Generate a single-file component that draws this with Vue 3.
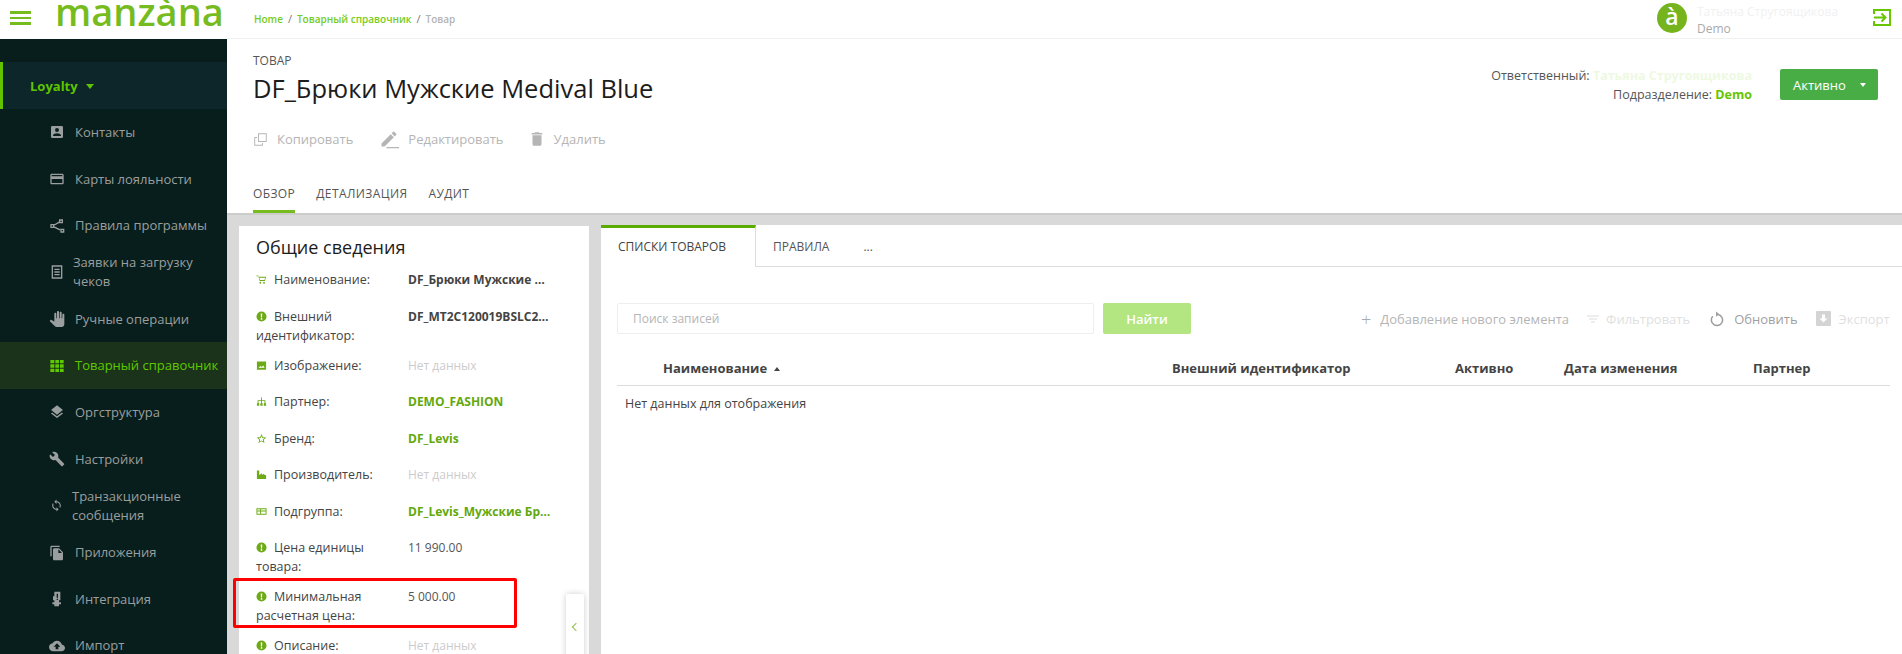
<script setup>
const P = {
  contact: 'M3 5v14a2 2 0 0 0 2 2h14a2 2 0 0 0 2-2V5a2 2 0 0 0-2-2H5a2 2 0 0 0-2 2zm12 4a3 3 0 1 1-6 0 3 3 0 0 1 6 0zm-9 8c0-2 4-3.1 6-3.1s6 1.1 6 3.1v1H6v-1z',
  card: 'M20 4H4c-1.11 0-1.99.89-1.99 2L2 18c0 1.11.89 2 2 2h16c1.11 0 2-.89 2-2V6c0-1.11-.89-2-2-2zm0 14H4v-6h16v6zm0-10H4V6h16v2z',
  rules: 'M15 2h6v6h-6V2zm2 2v2h2V4h-2zM2 9h6v6H2V9zm2 2v2h2v-2H4zm13 5h6v6h-6v-6zm2 2v2h2v-2h-2zM7.5 9.6l8-4.6 1 1.7-8 4.6-1-1.7zm1 3.1l8.5 4.2-.9 1.8-8.5-4.2.9-1.8z',
  receipt: 'M4 2h16v20H4V2zm2 2v16h12V4H6zm2 3h8v2H8V7zm0 4h8v2H8v-2zm0 4h8v2H8v-2z',
  hand: 'M23 5.5V20c0 2.2-1.8 4-4 4h-7.3c-1.08 0-2.1-.43-2.85-1.19L1 14.83s1.26-1.23 1.3-1.25c.22-.19.49-.29.79-.29.22 0 .42.06.6.16.04.01 4.31 2.46 4.31 2.46V4c0-.83.67-1.5 1.5-1.5S11 3.17 11 4v7h1V1.5c0-.83.67-1.5 1.5-1.5S15 .67 15 1.5V11h1V2.5c0-.83.67-1.5 1.5-1.5s1.5.67 1.5 1.5V11h1V5.5c0-.83.67-1.5 1.5-1.5s1.5.67 1.5 1.5z',
  grid: 'M2 3h6v5H2V3zm7.5 0h5.5v5H9.500V3zM16.500 3H22v5h-5.500V3zM2 9.500h6V14.500H2v-5zm7.500 0h5.500V14.500H9.500v-5zm7 0H22V14.500h-5.500v-5zM2 16h6v5H2v-5zm7.500 0h5.500v5H9.500v-5zm7 0H22v5h-5.500v-5z',
  layers: 'M11.99 18.54l-7.37-5.73L3 14.07l9 7 9-7-1.63-1.27-7.38 5.74zM12 16l7.36-5.73L21 9l-9-7-9 7 1.63 1.27L12 16z',
  wrench: 'M22.7 19l-9.1-9.1c.9-2.3.4-5-1.5-6.9-2-2-5-2.4-7.4-1.3L9 6 6 9 1.6 4.7C.4 7.1.9 10.1 2.9 12.1c1.9 1.9 4.6 2.4 6.9 1.5l9.1 9.1c.4.4 1 .4 1.4 0l2.3-2.3c.5-.4.5-1.1.1-1.4z',
  sync: 'M12 4V1L8 5l4 4V6c3.31 0 6 2.69 6 6 0 1.01-.25 1.97-.7 2.8l1.46 1.46C19.54 15.03 20 13.57 20 12c0-4.42-3.58-8-8-8zm0 14c-3.31 0-6-2.69-6-6 0-1.01.25-1.97.7-2.8L5.24 7.74C4.46 8.97 4 10.43 4 12c0 4.42 3.58 8 8 8v3l4-4-4-4v3z',
  files: 'M16 1H4c-1.1 0-2 .9-2 2v14h2V3h12V1zm-1 4l6 6v10c0 1.1-.9 2-2 2H7.990C6.890 23 6 22.100 6 21l.010-14c0-1.100.890-2 1.990-2h7zm-1 7h5.500L14 6.500V12z',
  plug: 'M8 1h9v13h-2v3h3v3h-3v3H8v-3H5v-3h3v-3H6V8h2V1zm3.500 3v6h2V4h-2zm0 7.500v2h2v-2h-2z',
  cloud: 'M19.350 10.040C18.670 6.590 15.640 4 12 4 9.110 4 6.600 5.640 5.350 8.040 2.340 8.360 0 10.910 0 14c0 3.310 2.690 6 6 6h13c2.760 0 5-2.240 5-5 0-2.640-2.050-4.780-4.650-4.960zM14 13v4h-4v-4H7l5-5 5 5h-3z',
  copy: 'M8 2h14v14H8V2zm1.500 1.500v11h11v-11h-11zM2 8h4.500v1.500h-3v11h11v-3H16V22H2V8z',
  edit: 'M3 17.250V21h3.750L17.810 9.940l-3.750-3.750L3 17.250zM20.710 7.040a1 1 0 0 0 0-1.410l-2.340-2.340a1 1 0 0 0-1.410 0l-1.830 1.830 3.750 3.750 1.830-1.830zM9 21.500h15V23H9z',
  trash: 'M6 19c0 1.100.9 2 2 2h8c1.100 0 2-.9 2-2V7H6v12zM19 4h-3.500l-1-1h-5l-1 1H5v2h14V4z',
  cart: 'M1 3h4l1 3h16l-2.500 9H8L5 5H1V3zm6 5l2 5h9.500L20 8H7zm2.500 9a2 2 0 1 1 0 4 2 2 0 0 1 0-4zm8 0a2 2 0 1 1 0 4 2 2 0 0 1 0-4z',
  info: 'M12 1a11 11 0 1 1 0 22 11 11 0 0 1 0-22zm-1.700 4.500.5 8.500h2.400l.5-8.500h-3.400zM12 15.500a1.900 1.900 0 1 0 0 3.800 1.900 1.900 0 0 0 0-3.800z',
  image: 'M2 3h20v18H2V3zm3 14h14l-3.500-5-3 3.500-2.500-2.500-5 4z',
  tree: 'M11 3h2v6h7.500v7h1.500v5h-5v-5h1.500v-5H13v5h1.500v5h-5v-5H11v-5H5.500v5H7v5H2v-5h1.500V9H11V3z',
  star: 'M12 2l3 7 7.500.6-5.700 4.900 1.800 7.400L12 18l-6.600 3.900 1.800-7.400L1.500 9.600 9 9l3-7zm0 4.800L10.300 11l-4.400.3 3.300 2.900-1 4.300 3.800-2.300 3.800 2.300-1-4.300 3.300-2.900-4.400-.3L12 6.800z',
  factory: 'M2 3h5v10l6-4v4l5-3v3h4v9H2V3z',
  group: 'M1 5h22v14H1V5zm2 2v3h6V7H3zm8 0v3h10V7H11zM3 12v5h6v-5H3zm8 0v5h10v-5H11z',
}

const menu = [
  { label: 'Контакты', icon: 'contact' },
  { label: 'Карты лояльности', icon: 'card' },
  { label: 'Правила программы', icon: 'rules' },
  { label: 'Заявки на загрузку чеков', icon: 'receipt', cls: 'wrap' },
  { label: 'Ручные операции', icon: 'hand' },
  { label: 'Товарный справочник', icon: 'grid', cls: 'active' },
  { label: 'Оргструктура', icon: 'layers' },
  { label: 'Настройки', icon: 'wrench' },
  { label: 'Транзакционные сообщения', icon: 'sync', cls: 'wrap narrow' },
  { label: 'Приложения', icon: 'files' },
  { label: 'Интеграция', icon: 'plug' },
  { label: 'Импорт', icon: 'cloud' },
]

const actions = [
  { label: 'Копировать', icon: 'copy', cls: 'a-copy' },
  { label: 'Редактировать', icon: 'edit', cls: 'a-edit' },
  { label: 'Удалить', icon: 'trash', cls: 'a-del' },
]

const fields = [
  { label: 'Наименование:', icon: 'cart', value: 'DF_Брюки Мужские Medival Blue', kind: 'strong' },
  { label: 'Внешний идентификатор:', icon: 'info', value: 'DF_MT2C120019BSLC2019MEDIVAL', kind: 'strong' },
  { label: 'Изображение:', icon: 'image', value: 'Нет данных', kind: 'empty' },
  { label: 'Партнер:', icon: 'tree', value: 'DEMO_FASHION', kind: 'link' },
  { label: 'Бренд:', icon: 'star', value: 'DF_Levis', kind: 'link' },
  { label: 'Производитель:', icon: 'factory', value: 'Нет данных', kind: 'empty' },
  { label: 'Подгруппа:', icon: 'group', value: 'DF_Levis_Мужские Брюки', kind: 'link' },
  { label: 'Цена единицы товара:', icon: 'info', value: '11 990.00', kind: 'plain' },
  { label: 'Минимальная расчетная цена:', icon: 'info', value: '5 000.00', kind: 'plain', marked: true },
  { label: 'Описание:', icon: 'info', value: 'Нет данных', kind: 'empty' },
]

const columns = [
  { label: 'Наименование', cls: 'c-name', sorted: true },
  { label: 'Внешний идентификатор', cls: 'c-ext' },
  { label: 'Активно', cls: 'c-act' },
  { label: 'Дата изменения', cls: 'c-date' },
  { label: 'Партнер', cls: 'c-part' },
]
</script>

<template>
  <div class="page">
    <aside class="side">
      <div class="brand">
        <div class="burger"><i></i><i></i><i></i></div>
        <span class="logo">manzàna</span>
      </div>
      <nav class="nav">
        <div class="section">Loyalty<span class="caret"></span></div>
        <a v-for="m in menu" :key="m.label" class="item" :class="m.cls">
          <svg class="item-icon" viewBox="0 0 24 24"><path :d="P[m.icon]" /></svg>
          <span class="item-text">{{ m.label }}</span>
        </a>
      </nav>
    </aside>

    <div class="main">
      <header class="top">
        <div class="crumbs">
          <a>Home</a><b>/</b><a>Товарный справочник</a><b>/</b><span>Товар</span>
        </div>
        <div class="user">
          <div class="avatar">à</div>
          <div class="who">
            <div class="who-name">Татьяна Стругоящикова</div>
            <div class="who-org">Demo</div>
          </div>
          <svg class="exit" viewBox="0 0 18 19" fill="none" stroke="#66c400" stroke-width="2">
            <path d="M1 6V2h16v15H1v-4" />
            <path d="M1 9.500h11M8.500 5.500l4 4-4 4" />
          </svg>
        </div>
      </header>

      <section class="head">
        <div class="head-row">
          <div>
            <div class="kicker">ТОВАР</div>
            <h1 class="title">DF_Брюки Мужские Medival Blue</h1>
          </div>
          <div class="owner">
            <div class="owner-lines">
              <div>Ответственный: <span class="pale">Татьяна Стругоящикова</span></div>
              <div>Подразделение: <span class="demo">Demo</span></div>
            </div>
            <button class="status">Активно<span class="status-caret"></span></button>
          </div>
        </div>
        <div class="actions">
          <a v-for="a in actions" :key="a.label" class="action" :class="a.cls">
            <svg viewBox="0 0 24 24"><path :d="P[a.icon]" /></svg>{{ a.label }}
          </a>
        </div>
        <div class="tabs">
          <a class="tab on">ОБЗОР</a>
          <a class="tab">ДЕТАЛИЗАЦИЯ</a>
          <a class="tab">АУДИТ</a>
        </div>
      </section>

      <div class="body">
        <section class="info">
          <h2 class="info-title">Общие сведения</h2>
          <div v-for="f in fields" :key="f.label" class="field">
            <div class="f-label">
              <svg class="f-icon" viewBox="0 0 24 24"><path :d="P[f.icon]" /></svg>{{ f.label }}
            </div>
            <div class="f-value" :class="f.kind">{{ f.value }}</div>
            <div v-if="f.marked" class="mark"></div>
          </div>
          <div class="collapse"><span></span></div>
        </section>

        <section class="panel">
          <div class="ptabs">
            <a class="ptab on">СПИСКИ ТОВАРОВ</a>
            <a class="ptab">ПРАВИЛА</a>
            <a class="ptab">...</a>
          </div>
          <div class="tools">
            <div class="search">Поиск записей</div>
            <button class="find">Найти</button>
            <div class="tool-links">
              <a class="tl t-add"><span class="plus">+</span>Добавление нового элемента</a>
              <a class="tl t-filter">
                <svg viewBox="0 0 12 10" fill="none" stroke="#dcdcdc"><path d="M0 2h12M2 5h8M4 8h4" /></svg>Фильтровать
              </a>
              <a class="tl t-refresh">
                <svg viewBox="0 0 16 18" fill="none" stroke="#9b9b9b" stroke-width="1.600">
                  <path d="M10 4.200A6 6 0 1 1 4 6" />
                  <path d="M7.500 1l3.500 3-3.500 2.500z" fill="#9b9b9b" stroke="none" />
                </svg>Обновить
              </a>
              <a class="tl t-export">
                <svg viewBox="0 0 15 15"><rect width="15" height="15" rx="1" fill="#d4d4d4" /><path d="M6 3.500h3v4h2.500l-4 4-4-4H6z" fill="#fff" /></svg>Экспорт
              </a>
            </div>
          </div>
          <div class="thead">
            <div v-for="c in columns" :key="c.label" class="th" :class="c.cls">
              {{ c.label }}<span v-if="c.sorted" class="sort"></span>
            </div>
          </div>
          <div class="nodata">Нет данных для отображения</div>
        </section>
      </div>
    </div>
  </div>
</template>

<style>
html, body { margin: 0; overflow: hidden; }
</style>

<style scoped>
* { box-sizing: border-box; }
.page {
  display: flex;
  width: 1902px;
  height: 654px;
  overflow: hidden;
  font-family: "Open Sans", "Noto Sans", sans-serif;
  font-size: 13px;
  color: #333;
  background: #fff;
}
.side { width: 227px; flex: none; background: #081e1c; }
.brand { height: 39px; background: #fff; display: flex; align-items: flex-start; overflow: hidden; }
.burger { width: 21px; margin: 11px 0 0 10px; display: flex; flex-direction: column; gap: 3px; }
.burger i { display: block; height: 2.500px; background: #76bc21; }
.logo {
  margin: -17px 0 0 24px;
  font-family: "Open Sans", sans-serif;
  font-weight: 600;
  font-size: 38px;
  line-height: 56px;
  color: #76bc21;
}
.nav { padding-top: 23px; }
.section {
  height: 47px;
  background: #0c2629;
  border-left: 3px solid #62c400;
  padding-left: 27px;
  display: flex;
  align-items: center;
  font-weight: 700;
  font-size: 13px;
  color: #5fc400;
}
.caret {
  margin: 2px 0 0 8px;
  border: 4.500px solid transparent;
  border-top: 5px solid #5fc400;
  border-bottom: 0;
}
.item {
  height: 46.700px;
  padding-left: 49px;
  display: flex;
  align-items: center;
  color: #9b9e9e;
  line-height: 19px;
}
.item-icon { width: 16px; height: 16px; flex: none; fill: #9b9e9e; }
.item-text { margin-left: 10px; }
.wrap .item-text { margin-left: 8px; width: 125px; }
.narrow { padding-left: 50px; }
.narrow .item-icon { width: 13px; height: 13px; }
.narrow .item-text { margin-left: 9px; }
.active { background: #1a331a; color: #5fc800; }
.active .item-icon { fill: #5fc800; }

.main { flex: 1; min-width: 0; display: flex; flex-direction: column; background: #d9d9d9; }
.top {
  height: 39px;
  flex: none;
  background: #fff;
  border-bottom: 1px solid #f0f0f0;
  padding-left: 27px;
  display: flex;
  align-items: center;
  justify-content: space-between;
}
.crumbs { font-size: 10px; font-weight: 600; color: #76cc22; margin-top: -1px; }
.crumbs b { font-weight: 400; color: #777; margin: 0 5px; font-size: 11px; }
.crumbs span { color: #b4b4b4; }
.user { display: flex; align-items: flex-start; height: 38px; }
.avatar {
  width: 30px;
  height: 30px;
  margin-top: 3px;
  border-radius: 50%;
  background: #76b41e;
  color: #fff;
  font-size: 23px;
  font-weight: 600;
  line-height: 27px;
  text-align: center;
}
.who { margin-left: 10px; width: 176px; font-size: 12px; line-height: 17px; padding-top: 3px; }
.who-name { color: #f1f1f1; }
.who-org { color: #aaa; }
.exit { width: 18px; height: 19px; margin: 8px 11px 0 0; }

.head { height: 176px; flex: none; background: #fff; border-bottom: 2px solid #ccc; padding-left: 26px; position: relative; }
.head-row { display: flex; justify-content: space-between; }
.kicker { margin-top: 13px; font-size: 12px; line-height: 17px; color: #555; }
.title { margin: 2px 0 0; font-size: 25.500px; font-weight: 400; line-height: 35px; color: #1c1c1c; }
.owner { display: flex; margin: 30px 24px 0 0; }
.owner-lines { text-align: right; line-height: 19px; font-size: 12.500px; color: #555; margin-top: -3px; }
.pale { color: #eef9e2; font-weight: 700; }
.demo { color: #66c400; font-weight: 700; }
.status {
  position: relative;
  width: 98px;
  height: 31px;
  margin-left: 28px;
  border: 0;
  border-radius: 2px;
  background: #49ad46;
  color: #fff;
  font: 400 13px "Open Sans", sans-serif;
  text-align: left;
  padding: 0 0 0 13px;
}
.status-caret {
  position: absolute;
  right: 12px;
  top: 14px;
  border: 3.500px solid transparent;
  border-top: 4px solid #fff;
  border-bottom: 0;
}
.actions { display: flex; margin-top: 23px; height: 20px; color: #b5b5b5; }
.action { display: flex; align-items: center; }
.action svg { fill: #b5b5b5; margin-right: 9px; }
.a-copy svg { width: 15px; height: 15px; }
.a-edit { margin-left: 26px; }
.a-edit svg { width: 20px; height: 20px; }
.a-del { margin-left: 26px; }
.a-del svg { width: 18px; height: 18px; margin-right: 8px; margin-left: -2px; }
.tabs { position: absolute; left: 26px; bottom: 0; display: flex; gap: 21px; }
.tab { height: 37px; font-size: 12px; letter-spacing: .4px; line-height: 18px; color: #555; padding-top: 9px; }
.tab.on { border-bottom: 3px solid #76bc21; }

.body { flex: 1; display: flex; min-height: 0; padding: 10px 0 0 12px; gap: 12px; }
.info { position: relative; width: 350px; flex: none; background: #fff; padding: 0 0 0 15px; margin-top: 1px; }
.info-title { margin: 0; padding: 9px 0 0 2px; height: 44px; font-size: 18px; font-weight: 400; line-height: 25px; color: #1c1c1c; }
.field { position: relative; display: flex; min-height: 36.500px; padding-bottom: 11px; line-height: 19px; }
.f-label { width: 154px; flex: none; padding-left: 2px; padding-right: 8px; color: #444; font-size: 12.500px; }
.f-icon { width: 11px; height: 11px; margin-right: 7px; fill: #6cab16; vertical-align: -1px; }
.f-value { width: 146px; overflow: hidden; text-overflow: ellipsis; white-space: nowrap; font-size: 12px; }
.strong { font-weight: 700; color: #444; }
.link { font-weight: 700; color: #62a80e; }
.empty { color: #ccc; }
.plain { color: #555; }
.mark {
  position: absolute;
  left: -21px;
  top: -9px;
  width: 284px;
  height: 50px;
  border: 3.500px solid #f00;
  border-radius: 2px;
}
.collapse {
  position: absolute;
  right: 5px;
  top: 368px;
  width: 18px;
  height: 70px;
  background: #fff;
  border-radius: 2px;
  box-shadow: 0 0 6px rgba(0, 0, 0, .2);
}
.collapse span {
  position: absolute;
  left: 7px;
  top: 30px;
  width: 6px;
  height: 6px;
  border-left: 1px solid #8fc24b;
  border-bottom: 1px solid #8fc24b;
  transform: rotate(45deg);
}
.panel { flex: 1; min-width: 0; background: #fff; }
.ptabs { height: 42px; display: flex; border-bottom: 1px solid #ddd; margin-top: 0; }
.ptab { padding: 13px 17px 0; font-size: 12px; line-height: 18px; color: #555; }
.ptab.on {
  width: 155px;
  height: 42px;
  background: #fff;
  border-top: 3px solid #5aad00;
  border-right: 1px solid #ddd;
  padding: 10px 0 0 17px;
  color: #444;
}
.tools { position: relative; display: flex; margin: 36px 0 0 16px; height: 31px; }
.search {
  width: 477px;
  height: 31px;
  border: 1px solid #eee;
  border-radius: 2px;
  padding-left: 15px;
  line-height: 29px;
  font-size: 12px;
  color: #b5b5b5;
}
.find {
  width: 88px;
  height: 31px;
  margin-left: 9px;
  border: 0;
  border-radius: 2px;
  background: #b3e580;
  color: #fff;
  font: 600 13px "Open Sans", sans-serif;
}
.tool-links { display: flex; align-items: center; margin-left: 170px; font-size: 13px; color: #bbb; white-space: nowrap; }
.tl { display: flex; align-items: center; }
.plus { font-size: 18px; font-weight: 300; margin-right: 9px; line-height: 18px; color: #aaa; }
.t-add { color: #b5b5b5; }
.t-filter { margin-left: 18px; color: #dfdfdf; }
.t-filter svg { width: 12px; height: 10px; margin-right: 7px; }
.t-refresh { margin-left: 19px; color: #9f9f9f; }
.t-refresh svg { width: 15px; height: 18px; margin-right: 10px; }
.t-export { margin-left: 18px; color: #dfdfdf; }
.t-export svg { width: 15px; height: 15px; margin-right: 8px; }
.thead { display: flex; height: 52px; margin: 0 12px 0 16px; padding-top: 24px; border-bottom: 1px solid #ddd; }
.th { font-weight: 700; font-size: 13px; line-height: 20px; color: #444; white-space: nowrap; }
.c-name { margin-left: 46px; width: 509px; }
.c-ext { width: 283px; }
.c-act { width: 109px; }
.c-date { width: 189px; }
.sort {
  display: inline-block;
  margin: 0 0 2px 7px;
  border: 3.500px solid transparent;
  border-bottom: 4px solid #444;
  border-top: 0;
}
.nodata { margin: 8px 0 0 24px; font-size: 12.500px; line-height: 20px; color: #444; }
</style>
